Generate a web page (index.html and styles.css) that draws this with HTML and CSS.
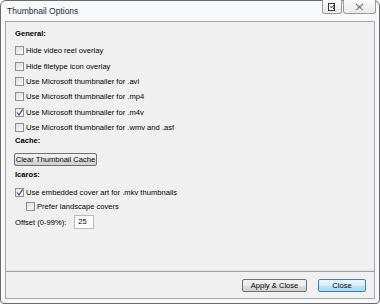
FILE: index.html
```html
<!DOCTYPE html>
<html lang="en">
<head>
  <meta charset="UTF-8">
  <title>Thumbnail Options</title>
  <link rel="stylesheet" href="styles.css">
</head>
<body>

  <div class="window">
    <div class="titlebar">
      <span class="title">Thumbnail Options</span>
      <div class="caption-btns">
        <span class="cap-btn pin">
          <svg width="9" height="8" viewBox="0 0 9 8"><rect x="0.5" y="0.5" width="6" height="7" fill="#fff" stroke="#333"/><path d="M2 4h5M5 2l2 2-2 2" fill="none" stroke="#333"/></svg>
        </span>
        <span class="cap-btn close">
          <svg width="9" height="8" viewBox="0 0 9 8"><path d="M1 1l7 6M8 1L1 7" stroke="#555" stroke-width="1.3" stroke-dasharray="1.2 0.6"/></svg>
        </span>
      </div>
    </div>

    <div class="panel">
      <div class="content">
        <div class="heading">General:</div>
        <div class="rows">
          <label class="row"><span class="box"></span>Hide video reel overlay</label>
          <label class="row"><span class="box"></span>Hide filetype icon overlay</label>
          <label class="row"><span class="box"></span>Use Microsoft thumbnailer for .avi</label>
          <label class="row"><span class="box"></span>Use Microsoft thumbnailer for .mp4</label>
          <label class="row"><span class="box checked"><svg width="7" height="7" viewBox="0 0 7 7"><path d="M1 3.5l2 2.5 3.5-5.5" fill="none" stroke="#2b4a8f" stroke-width="1.2"/></svg></span>Use Microsoft thumbnailer for .m4v</label>
          <label class="row"><span class="box"></span>Use Microsoft thumbnailer for .wmv and .asf</label>
        </div>

        <div class="heading">Cache:</div>
        <button class="btn cache-btn">Clear Thumbnail Cache</button>

        <div class="heading icaros">Icaros:</div>
        <label class="row mkv"><span class="box checked"><svg width="7" height="7" viewBox="0 0 7 7"><path d="M1 3.5l2 2.5 3.5-5.5" fill="none" stroke="#2b4a8f" stroke-width="1.2"/></svg></span>Use embedded cover art for .mkv thumbnails</label>
        <label class="row sub"><span class="box"></span>Prefer landscape covers</label>
        <div class="offset">
          <span>Offset (0-99%):</span>
          <span class="field">25</span>
        </div>
      </div>

      <div class="footer">
        <button class="btn apply">Apply &amp; Close</button>
        <button class="btn default">Close</button>
      </div>
    </div>
  </div>

</body>
</html>
```

FILE: styles.css
```css
body {
  margin: 0;
  background: #ffffff;
  font-family: 'Liberation Sans', Arial, sans-serif;
  font-size: 7.6px;
  color: #000;
}

.window {
  width: 378px;
  height: 302px;
  border: 1px solid #6b6b6b;
  border-radius: 6px 6px 4px 4px;
  background: #f7f8fa;
  display: flex;
  flex-direction: column;
}

.titlebar {
  height: 20px;
  display: flex;
  justify-content: space-between;
  align-items: flex-start;
  padding-left: 6px;
}

.title {
  font-size: 8.5px;
  color: #1b2b3e;
  margin-top: 5px;
}

.caption-btns {
  display: flex;
  gap: 1px;
  margin-right: 3px;
  margin-top: -1px;
}

.cap-btn {
  height: 13px;
  border: 1px solid #9a9a9a;
  border-top: none;
  border-radius: 0 0 3px 3px;
  background: linear-gradient(#fbfbfb, #e9e9e9);
  display: flex;
  align-items: center;
  justify-content: center;
}

.cap-btn.pin { width: 18px; }
.cap-btn.close { width: 31px; }

.panel {
  flex: 1;
  margin: 0 4px 4px 4px;
  border: 1px solid #a6a6a6;
  background: #f0f0f0;
  display: flex;
  flex-direction: column;
}

.content {
  flex: 1;
  padding: 6px 9px 0 9px;
  border-bottom: 1px solid #e2e2e2;
}

.heading {
  font-weight: bold;
  height: 12px;
  line-height: 12px;
}

.rows {
  margin-top: 3px;
}

.row {
  height: 15.4px;
  display: flex;
  align-items: center;
}

.box {
  width: 7px;
  height: 7px;
  border: 1px solid #8f8f8f;
  background: linear-gradient(135deg, #dcdcdc, #fbfbfb);
  margin-right: 2px;
  display: flex;
  align-items: center;
  justify-content: center;
  flex-shrink: 0;
}

.box.checked {
  background: linear-gradient(135deg, #e4e4e4, #ffffff);
}

.btn {
  font-family: 'Liberation Sans', Arial, sans-serif;
  font-size: 7.6px;
  color: #000;
  height: 13px;
  padding: 0;
  border: 1px solid #707070;
  border-radius: 2px;
  background: linear-gradient(#f2f2f2 0%, #ebebeb 50%, #dddddd 51%, #cfcfcf 100%);
}

.cache-btn {
  display: block;
  width: 83px;
  margin-top: 6px;
  margin-left: -1px;
}

.icaros {
  margin-top: 2.5px;
}

.mkv {
  margin-top: 4px;
  height: 15px;
}

.sub {
  padding-left: 11px;
  height: 13.5px;
}

.offset {
  display: flex;
  align-items: center;
  gap: 8px;
  margin-top: 2px;
  height: 14px;
}

.field {
  width: 15px;
  height: 12px;
  line-height: 12px;
  padding-left: 3px;
  background: #fff;
  border: 1px solid #b8bbc2;
}

.footer {
  height: 26px;
  border-top: 1px solid #a0a0a0;
  display: flex;
  justify-content: flex-end;
  align-items: center;
  gap: 11px;
  padding-right: 8px;
}

.apply { width: 65px; }

.default {
  width: 48px;
  border-color: #3c7fb1;
  background: linear-gradient(#eaf6fd 0%, #d9f0fc 50%, #bee6fd 51%, #a7d9f5 100%);
}
```
